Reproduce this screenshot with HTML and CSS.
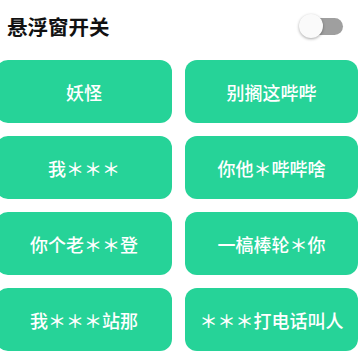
FILE: index.html
```html
<!DOCTYPE html>
<html>
<head>
<meta charset="utf-8">
<link rel="stylesheet" href="styles.css">
</head>
<body>
<div class="page">
  <div class="header">
    <div class="title">悬浮窗开关</div>
    <div class="switch"><div class="track"></div><div class="thumb"></div></div>
  </div>
  <div class="grid">
    <div class="btn">妖怪</div>
    <div class="btn">别搁这哔哔</div>
    <div class="btn">我＊＊＊</div>
    <div class="btn">你他＊哔哔啥</div>
    <div class="btn">你个老＊＊登</div>
    <div class="btn">一槁棒轮＊你</div>
    <div class="btn">我＊＊＊站那</div>
    <div class="btn">＊＊＊打电话叫人</div>
  </div>
</div>
</body>
</html>
```
FILE: styles.css
```css
html, body {
  margin: 0;
  padding: 0;
  background: #ffffff;
  overflow: hidden;
}
.page {
  width: 360px;
  height: 360px;
  overflow: hidden;
  font-family: "Noto Sans CJK SC", "Noto Sans", sans-serif;
}
.header {
  height: 56px;
  display: flex;
  align-items: center;
  justify-content: space-between;
  padding: 0 17px 4px 7px;
  box-sizing: border-box;
}
.title {
  font-size: 20.5px;
  font-weight: 700;
  color: #111;
  line-height: 1;
}
.switch {
  position: relative;
  width: 44px;
  height: 26px;
}
.track {
  position: absolute;
  left: 6px;
  top: 5px;
  width: 38px;
  height: 17px;
  border-radius: 9px;
  background: #9f9f9f;
}
.thumb {
  position: absolute;
  left: 0;
  top: 1px;
  width: 24px;
  height: 24px;
  border-radius: 50%;
  background: #fafafa;
  box-shadow: 0 1px 3px rgba(0,0,0,0.35);
}
.grid {
  margin-top: 4px;
  margin-left: -4px;
  display: grid;
  grid-template-columns: 176px 173px;
  grid-auto-rows: 63px;
  column-gap: 13px;
  row-gap: 13px;
}
.btn {
  background: #26d398;
  border-radius: 12px;
  color: #ffffff;
  font-size: 18px;
  font-weight: 500;
  display: flex;
  align-items: center;
  justify-content: center;
  white-space: nowrap;
}
```
